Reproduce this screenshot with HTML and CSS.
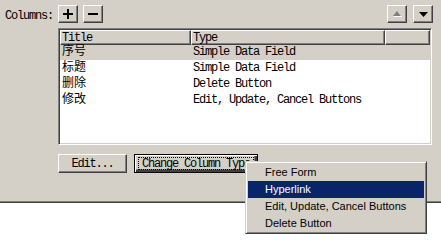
FILE: index.html
```html
<!DOCTYPE html>
<html lang="en">
<head>
    <meta charset="UTF-8">
    <title>Columns</title>
    <link rel="stylesheet" href="styles.css">
</head>
<body>
<div class="panel">
    <!-- Toolbar -->
    <div class="toolbar">
        <span class="label">Columns:</span>
        <button class="tool-btn">
            <svg width="10" height="10" viewBox="0 0 10 10"><path d="M4 0h2v4h4v2h-4v4h-2v-4h-4v-2h4z" fill="#000"/></svg>
        </button>
        <button class="tool-btn">
            <svg width="10" height="10" viewBox="0 0 10 10"><path d="M0 4h10v2h-10z" fill="#000"/></svg>
        </button>
        <div class="spacer"></div>
        <button class="tool-btn">
            <svg width="9" height="6" viewBox="0 0 9 6"><path d="M5 1l4 5h-9z" fill="#fff"/><path d="M4 0l4 5h-8z" fill="#808080"/></svg>
        </button>
        <button class="tool-btn down">
            <svg width="9" height="5" viewBox="0 0 9 5"><path d="M0 0h9l-4.5 5z" fill="#000"/></svg>
        </button>
    </div>

    <!-- Column list -->
    <div class="listbox">
        <div class="list-header">
            <div class="head-cell">Title</div>
            <div class="head-cell">Type</div>
            <div class="head-cell"></div>
        </div>
        <div class="list-row selected">
            <div class="cell cjk">序号</div>
            <div class="cell">Simple Data Field</div>
        </div>
        <div class="list-row">
            <div class="cell cjk">标题</div>
            <div class="cell">Simple Data Field</div>
        </div>
        <div class="list-row">
            <div class="cell cjk">删除</div>
            <div class="cell">Delete Button</div>
        </div>
        <div class="list-row">
            <div class="cell cjk">修改</div>
            <div class="cell">Edit, Update, Cancel Buttons</div>
        </div>
    </div>

    <div class="actions">
        <button class="btn edit-btn">Edit...</button>
        <button class="btn change-btn"><span class="focus">Change Column Type</span></button>
    </div>
</div>

<!-- Popup menu -->
<div class="menu">
    <div class="menu-item">Free Form</div>
    <div class="menu-item active">Hyperlink</div>
    <div class="menu-item">Edit, Update, Cancel Buttons</div>
    <div class="menu-item">Delete Button</div>
</div>
</body>
</html>
```

FILE: styles.css
```css
/* General */
html, body {
    height: 100%;
}

body {
    position: relative;
    margin: 0;
    background-color: #ffffff;
    font-family: "Liberation Mono", "Noto Sans CJK SC", monospace;
    font-size: 12px;
    letter-spacing: -1.2px;
    color: #000;
}

.panel {
    height: 202px;
    box-sizing: border-box;
    padding: 5px 8px 0 5px;
    background-color: #d4d0c8;
    border-bottom: 1px solid #808080;
    box-shadow: 0 1px 0 #404040;
}

/* Toolbar */
.toolbar {
    display: flex;
    align-items: center;
    height: 18px;
}

.label {
    width: 53px;
    padding-top: 4px;
}

.tool-btn {
    width: 20px;
    height: 18px;
    margin-right: 5px;
    padding: 0;
    display: flex;
    align-items: center;
    justify-content: center;
    background-color: #d4d0c8;
    border: 1px solid;
    border-color: #ffffff #404040 #404040 #ffffff;
    box-shadow: inset -1px -1px 0 #808080;
}

.tool-btn.down {
    margin-right: 0;
    margin-left: 1px;
}

.spacer {
    flex: 1;
}

/* List box */
.listbox {
    margin: 5px 0 0 53px;
    width: 374px;
    height: 117px;
    box-sizing: border-box;
    background-color: #ffffff;
    border: 1px solid;
    border-color: #808080 #ffffff #ffffff #808080;
    box-shadow: inset 1px 1px 0 #404040, inset -1px -1px 0 #d4d0c8;
    padding: 1px;
}

.list-header {
    display: grid;
    grid-template-columns: 131px 194px 1fr;
    height: 14px;
}

.head-cell {
    box-sizing: border-box;
    background-color: #d4d0c8;
    border: 1px solid;
    border-color: #ffffff #404040 #404040 #ffffff;
    box-shadow: inset -1px -1px 0 #808080;
    padding: 1px 0 0 1px;
    line-height: 12px;
}

.list-row {
    display: grid;
    grid-template-columns: 131px 1fr;
    height: 16px;
    line-height: 16px;
}

.list-row.selected {
    background-color: #d4d0c8;
}

.cell {
    padding-left: 2px;
    white-space: nowrap;
}

.cjk {
    letter-spacing: 0;
}

/* Buttons */
.actions {
    display: flex;
    gap: 7px;
    margin: 9px 0 0 53px;
}

.btn {
    height: 19px;
    padding: 0;
    font-family: inherit;
    font-size: 12px;
    letter-spacing: -1.2px;
    color: #000;
    background-color: #d4d0c8;
    border: 1px solid;
    border-color: #ffffff #404040 #404040 #ffffff;
    box-shadow: inset -1px -1px 0 #808080;
}

.edit-btn {
    width: 69px;
}

.change-btn {
    width: 124px;
    border: 1px solid #000;
    box-shadow: inset 1px 1px 0 #ffffff, inset -2px -2px 0 #404040, inset -3px -3px 0 #808080;
    padding: 2px 3px;
}

.focus {
    display: block;
    height: 11px;
    line-height: 12px;
    border: 1px dotted #000;
    white-space: nowrap;
    padding-left: 3px;
    text-align: left;
}

/* Popup menu */
.menu {
    position: absolute;
    left: 245px;
    top: 161px;
    width: 182px;
    box-sizing: border-box;
    padding: 1px;
    background-color: #d4d0c8;
    border: 1px solid;
    border-color: #d4d0c8 #404040 #404040 #d4d0c8;
    box-shadow: inset 1px 1px 0 #ffffff, inset -1px -1px 0 #808080;
    font-family: "Liberation Sans", Arial, sans-serif;
    letter-spacing: 0;
    font-size: 11px;
}

.menu-item {
    height: 17px;
    line-height: 17px;
    padding-left: 17px;
    margin: 0 1px;
    white-space: nowrap;
}

.menu-item:first-child {
    margin-top: 1px;
}

.menu-item.active {
    background-color: #0a246a;
    color: #ffffff;
}
```
